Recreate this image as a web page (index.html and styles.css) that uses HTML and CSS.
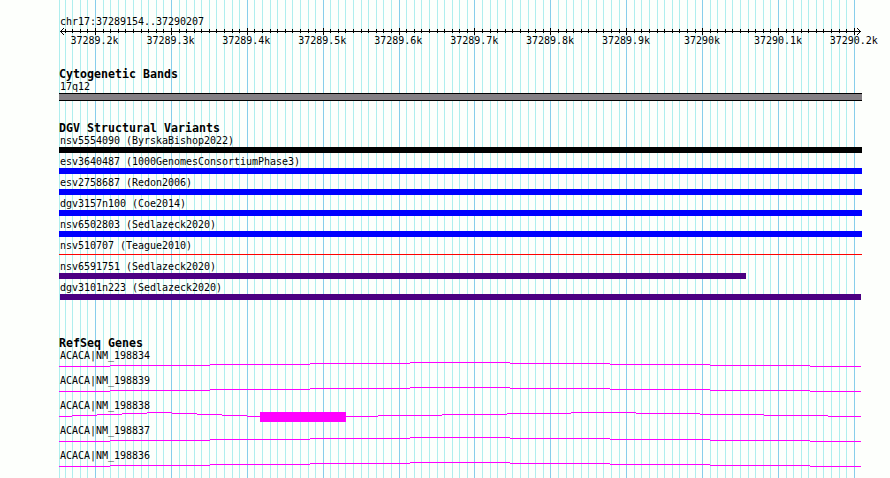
FILE: index.html
```
<!DOCTYPE html>
<html lang="en">
<head>
    <meta charset="UTF-8">
    <title>chr17:37289154..37290207</title>
    <link rel="stylesheet" href="styles.css">
</head>
<body>
    <div class="browser">
        <svg class="grid" width="890" height="478">
            <path class="minor" id="grid-minor" />
            <path class="major" id="grid-major" />
        </svg>

        <!-- Scale -->
        <div class="ruler">
            <p class="label">chr17:37289154..37290207</p>
            <svg class="scale" width="803" height="9">
                <path id="scale-ticks" />
                <path d="M1 4.5H802M2 3.5h1M3 2.5h1M4 1.5h1M2 5.5h1M3 6.5h1M4 7.5h1M800 3.5h1M799 2.5h1M798 1.5h1M800 5.5h1M799 6.5h1M798 7.5h1" />
            </svg>
            <div class="scale-labels">
                <span>37289.2k</span><span>37289.3k</span><span>37289.4k</span><span>37289.5k</span><span>37289.6k</span><span>37289.7k</span><span>37289.8k</span><span>37289.9k</span><span>37290k</span><span>37290.1k</span><span>37290.2k</span>
            </div>
        </div>

        <!-- Cytogenetic Bands -->
        <div class="track cyto">
            <h2>Cytogenetic Bands</h2>
            <p class="label">17q12</p>
            <div class="band"></div>
        </div>

        <!-- DGV Structural Variants -->
        <div class="track variants">
            <h2>DGV Structural Variants</h2>
            <div class="variant"><p class="label">nsv5554090 (ByrskaBishop2022)</p><div class="bar black"></div></div>
            <div class="variant"><p class="label">esv3640487 (1000GenomesConsortiumPhase3)</p><div class="bar blue"></div></div>
            <div class="variant"><p class="label">esv2758687 (Redon2006)</p><div class="bar blue"></div></div>
            <div class="variant"><p class="label">dgv3157n100 (Coe2014)</p><div class="bar blue"></div></div>
            <div class="variant"><p class="label">nsv6502803 (Sedlazeck2020)</p><div class="bar blue"></div></div>
            <div class="variant"><p class="label">nsv510707 (Teague2010)</p><div class="bar red"></div></div>
            <div class="variant"><p class="label">nsv6591751 (Sedlazeck2020)</p><div class="bar purple short"></div></div>
            <div class="variant"><p class="label">dgv3101n223 (Sedlazeck2020)</p><div class="bar purple inset"></div></div>
        </div>

        <!-- RefSeq Genes -->
        <div class="track genes">
            <h2>RefSeq Genes</h2>
            <div class="gene"><p class="label">ACACA|NM_198834</p><svg width="803" height="13"><use href="#intron" /></svg></div>
            <div class="gene"><p class="label">ACACA|NM_198839</p><svg width="803" height="13"><use href="#intron" /></svg></div>
            <div class="gene"><p class="label">ACACA|NM_198838</p>
                <svg width="803" height="13">
                    <path d="M0 6.5h13m0 -1h25m0 -1h25m0 -1h25m0 -1h25m0 1h25m0 1h25m0 1h25m0 1h131m0 -1h64m0 -1h65m0 -1h64m0 -1h65m0 1h64m0 1h64m0 1h64m0 1h33" />
                    <rect x="201" y="2" width="86" height="10" />
                </svg>
            </div>
            <div class="gene"><p class="label">ACACA|NM_198837</p><svg width="803" height="13"><use href="#intron" /></svg></div>
            <div class="gene"><p class="label">ACACA|NM_198836</p><svg width="803" height="13"><use href="#intron" /></svg></div>
        </div>
    </div>

    <svg class="defs" width="0" height="0">
        <defs>
            <path id="intron" d="M0 6.5h51m0 -1h100m0 -1h100m0 -1h100m0 -1h100m0 1h100m0 1h100m0 1h100m0 1h51" />
        </defs>
    </svg>

    <script>
        // one line every 10 bp, a darker one every 100 bp
        let minor = 'M59.5 0V478';
        let major = '';
        let ticks = '';
        for (let i = -4; i <= 100; i++) {
            const x = Math.floor(95.583 + i * 7.5876) + 0.5;
            if (i % 10 === 0) {
                major += `M${x} 0V478`;
                ticks += `M${x - 59} 1V8`;
            } else {
                minor += `M${x} 0V478`;
                ticks += `M${x - 59} 2V6`;
            }
        }
        document.getElementById('grid-minor').setAttribute('d', minor);
        document.getElementById('grid-major').setAttribute('d', major);
        document.getElementById('scale-ticks').setAttribute('d', ticks);
    </script>
</body>
</html>
```
FILE: styles.css
```
* {
    margin: 0;
    padding: 0;
    box-sizing: border-box;
}

body {
    background-color: #fdfffc;
    color: #000000;
    font-family: "DejaVu Sans Mono", "Liberation Mono", monospace;
    overflow: hidden;
}

svg {
    display: block;
    fill: none;
    shape-rendering: crispEdges;
}

.browser {
    position: relative;
    width: 890px;
    height: 478px;
    padding: 15px 0 0 59px;
    overflow: hidden;
}

/* Grid lines behind the tracks */
.grid {
    position: absolute;
    top: 0;
    left: 0;
    z-index: -1;
}

.minor {
    stroke: #afeeee;
}

.major {
    stroke: #87ceeb;
}

.label {
    height: 12px;
    padding-left: 1px;
    font-size: 10px;
    line-height: 14px;
    letter-spacing: -0.02px;
    white-space: pre;
}

h2 {
    height: 12px;
    font-size: 11.6px;
    line-height: 12px;
    letter-spacing: 0.015px;
    white-space: pre;
}

/* Scale */
.ruler {
    height: 53px;
}

.scale {
    stroke: #000000;
}

.scale-labels {
    display: grid;
    grid-template-columns: repeat(11, 75.95px);
    width: 836px;
    margin: -1px 0 0 -2.5px;
    font-size: 10px;
    line-height: 12px;
    letter-spacing: -0.02px;
    text-align: center;
}

/* Cytogenetic Bands */
.band {
    width: 803px;
    height: 8px;
    margin-top: 1px;
    background-color: #848084;
    border: solid #000000;
    border-width: 1px 0;
}

/* DGV Structural Variants */
.variants {
    margin-top: 21px;
}

.variant {
    height: 21px;
}

.bar {
    width: 803px;
    height: 6px;
    margin-top: 1px;
}

.black {
    background-color: #000000;
}

.blue {
    background-color: #0000ff;
}

.red {
    height: 1px;
    margin-top: 3px;
    background-color: #ff0000;
}

.purple {
    background-color: #4b0082;
}

.short {
    width: 687px;
}

.inset {
    width: 801px;
    margin-left: 1px;
}

/* RefSeq Genes */
.genes {
    margin-top: 35px;
}

.gene {
    height: 25px;
}

.gene svg {
    margin-top: -1px;
}

.gene path,
#intron {
    stroke: #ff00ff;
}

.gene rect {
    fill: #ff00ff;
}

.defs {
    position: absolute;
}
```
